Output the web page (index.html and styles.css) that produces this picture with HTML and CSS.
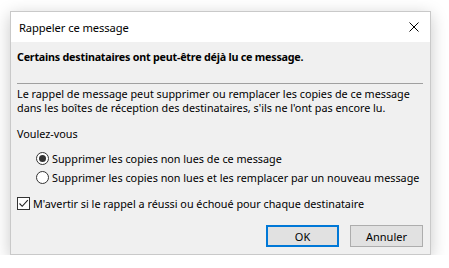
FILE: index.html
```html
<!DOCTYPE html>
<html lang="fr">
<head>
  <meta charset="UTF-8">
  <meta name="viewport" content="width=device-width, initial-scale=1.0">
  <title>Rappeler ce message</title>
  <link rel="stylesheet" href="styles.css">
</head>
<body>
  <div class="dialog">
    <div class="title-bar">
      <span class="title-text">Rappeler ce message</span>
      <button class="close-btn" aria-label="Fermer">
        <svg width="10" height="10" viewBox="0 0 10 10">
          <path d="M0.5 0.5 L9.5 9.5 M9.5 0.5 L0.5 9.5" stroke="#000" stroke-width="1" fill="none"/>
        </svg>
      </button>
    </div>

    <div class="dialog-body">
      <div class="warning">Certains destinataires ont peut-être déjà lu ce message.</div>
      <div class="separator"></div>
      <p class="intro">Le rappel de message peut supprimer ou remplacer les copies de ce message<br>dans les boîtes de réception des destinataires, s'ils ne l'ont pas encore lu.</p>
      <div class="question">Voulez-vous</div>

      <div class="radio-group">
        <label class="option">
          <span class="radio checked"></span>
          <span class="option-text">Supprimer les copies non lues de ce message</span>
        </label>
        <label class="option">
          <span class="radio"></span>
          <span class="option-text">Supprimer les copies non lues et les remplacer par un nouveau message</span>
        </label>
      </div>

      <label class="check-row">
        <span class="checkbox">
          <svg width="11" height="11" viewBox="0 0 11 11">
            <path d="M1.5 5.5 L4.2 8.3 L9.8 2.2" stroke="#222" stroke-width="1.1" fill="none"/>
          </svg>
        </span>
        <span class="option-text">M'avertir si le rappel a réussi ou échoué pour chaque destinataire</span>
      </label>

      <div class="button-row">
        <button class="dlg-btn btn-default">OK</button>
        <button class="dlg-btn">Annuler</button>
      </div>
    </div>
  </div>
</body>
</html>
```

FILE: styles.css
```css
* {
  margin: 0;
  padding: 0;
  box-sizing: border-box;
}

body {
  font-family: "Noto Sans", "Open Sans", sans-serif;
  font-size: 10.8px;
  color: #000;
  background: #ffffff;
  -webkit-font-smoothing: antialiased;
}

.dialog {
  width: 421px;
  height: 244px;
  margin: 11px 0 0 10px;
  border: 1px solid #c9c9c9;
  background: #f0f0f0;
  box-shadow: 0 4px 16px rgba(0, 0, 0, 0.22);
  display: flex;
  flex-direction: column;
}

.title-bar {
  height: 30px;
  background: #ffffff;
  display: flex;
  align-items: center;
  justify-content: space-between;
  padding: 0 10px 0 8px;
}

.title-text {
  font-size: 11.2px;
  letter-spacing: -0.1px;
  color: #000;
}

.close-btn {
  border: none;
  background: transparent;
  width: 12px;
  height: 12px;
  display: flex;
  align-items: center;
  justify-content: center;
}

.dialog-body {
  flex: 1;
  padding: 8px 7px 0 6px;
  display: flex;
  flex-direction: column;
}

.warning {
  font-weight: 700;
  font-size: 10.75px;
  line-height: 15px;
  letter-spacing: -0.23px;
}

.separator {
  height: 1px;
  background: #a0a0a0;
  margin-top: 18px;
}

.intro {
  line-height: 14px;
  margin-top: 3px;
  white-space: nowrap;
}

.question {
  line-height: 15px;
  margin-top: 11px;
}

.radio-group {
  margin-top: 8px;
  padding-left: 19px;
}

.option,
.check-row {
  display: flex;
  align-items: center;
  height: 19px;
  white-space: nowrap;
}

.radio {
  width: 13px;
  height: 13px;
  border: 1px solid #333;
  border-radius: 50%;
  background: #fff;
  margin-right: 3px;
  display: flex;
  align-items: center;
  justify-content: center;
}

.radio.checked::after {
  content: "";
  width: 7px;
  height: 7px;
  border-radius: 50%;
  background: #333;
}

.check-row {
  margin-top: 7px;
}

.checkbox {
  width: 13px;
  height: 13px;
  border: 1px solid #333;
  background: #fff;
  margin-right: 3px;
  display: flex;
  align-items: center;
  justify-content: center;
}

.button-row {
  margin-top: 12px;
  display: flex;
  justify-content: flex-end;
  gap: 11px;
}

.dlg-btn {
  width: 73px;
  height: 22px;
  font-family: inherit;
  font-size: 11px;
  color: #000;
  background: #e1e1e1;
  border: 1px solid #adadad;
}

.btn-default {
  border: 2px solid #0078d7;
}
```
